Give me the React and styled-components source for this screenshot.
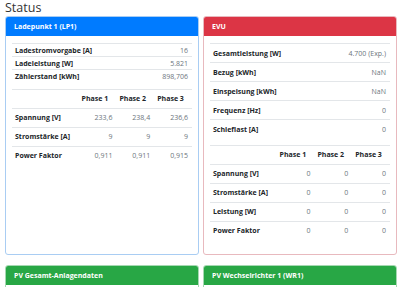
import styled, { createGlobalStyle } from 'styled-components';

const GlobalStyle = createGlobalStyle`
  html, body {
    margin: 0;
    padding: 0;
    background: #fff;
  }
  body {
    font-family: "Open Sans", "Noto Sans", sans-serif;
    color: #212529;
  }
`;

const Page = styled.div`
  padding: 0 3px 0 5px;
`;

const Title = styled.h1`
  margin: 0;
  font-size: 12.5px;
  font-weight: 400;
  line-height: 16px;
  color: #333;
`;

const Grid = styled.div`
  display: grid;
  grid-template-columns: 1fr 1fr;
  column-gap: 4px;
  row-gap: 10px;
`;

const Card = styled.div`
  display: flex;
  flex-direction: column;
  border: 1px solid ${(p) => p.$border};
  border-radius: 3px;
  overflow: hidden;
  background: #fff;
`;

const CardHeader = styled.div`
  display: flex;
  align-items: center;
  height: 19px;
  padding: 0 8px;
  background: ${(p) => p.$bg};
  color: #fff;
  font-size: 7px;
  font-weight: 700;
`;

const CardBody = styled.div`
  flex: 1;
  padding: 7px 6px 8px 6px;
`;

const Table = styled.table`
  width: 100%;
  border-collapse: collapse;
  margin-bottom: 6px;
  font-size: 7px;
  table-layout: fixed;
`;

const Row = styled.tr`
  height: ${(p) => p.$h || 19}px;
`;

const Label = styled.td`
  padding: 0 3px;
  border-top: 1px solid #e3e6e9;
  font-weight: 700;
  color: #212529;
  text-align: left;
  white-space: nowrap;
`;

const Value = styled.td`
  padding: 0 4px;
  border-top: 1px solid #e3e6e9;
  color: #6c757d;
  text-align: right;
  white-space: nowrap;
`;

const Head = styled.th`
  padding: 0 3px;
  border-top: 1px solid #e3e6e9;
  border-bottom: 1px solid #e3e6e9;
  font-weight: 700;
  text-align: left;
  white-space: nowrap;
`;

const KeyValueTable = ({ rows, h }) => (
  <Table>
    <tbody>
      {rows.map(([k, v]) => (
        <Row key={k} $h={h}>
          <Label>{k}</Label>
          <Value>{v}</Value>
        </Row>
      ))}
    </tbody>
  </Table>
);

const PhaseTable = ({ rows }) => (
  <Table>
    <colgroup>
      <col style={{ width: '37%' }} />
      <col style={{ width: '21%' }} />
      <col style={{ width: '21%' }} />
      <col style={{ width: '21%' }} />
    </colgroup>
    <thead>
      <Row>
        <Head />
        <Head>Phase 1</Head>
        <Head>Phase 2</Head>
        <Head>Phase 3</Head>
      </Row>
    </thead>
    <tbody>
      {rows.map(([k, ...vals]) => (
        <Row key={k}>
          <Label>{k}</Label>
          {vals.map((v, i) => (
            <Value key={i}>{v}</Value>
          ))}
        </Row>
      ))}
    </tbody>
  </Table>
);

const colors = {
  blue: { bg: '#007bff', border: '#a9cdf3' },
  red: { bg: '#dc3545', border: '#e8b9be' },
  green: { bg: '#28a745', border: '#a6d8b2' },
};

const StatusCard = ({ title, color, children }) => (
  <Card $border={colors[color].border}>
    <CardHeader $bg={colors[color].bg}>{title}</CardHeader>
    <CardBody>{children}</CardBody>
  </Card>
);

export default function App() {
  return (
    <Page>
      <GlobalStyle />
      <Title>Status</Title>
      <Grid>
        <StatusCard title="Ladepunkt 1 (LP1)" color="blue">
          <KeyValueTable
            h={13}
            rows={[
              ['Ladestromvorgabe [A]', '16'],
              ['Ladeleistung [W]', '5.821'],
              ['Zählerstand [kWh]', '898,706'],
            ]}
          />
          <PhaseTable
            rows={[
              ['Spannung [V]', '233,6', '238,4', '236,6'],
              ['Stromstärke [A]', '9', '9', '9'],
              ['Power Faktor', '0,911', '0,911', '0,915'],
            ]}
          />
        </StatusCard>
        <StatusCard title="EVU" color="red">
          <KeyValueTable
            rows={[
              ['Gesamtleistung [W]', '4.700 (Exp.)'],
              ['Bezug [kWh]', 'NaN'],
              ['Einspeisung [kWh]', 'NaN'],
              ['Frequenz [Hz]', '0'],
              ['Schieflast [A]', '0'],
            ]}
          />
          <PhaseTable
            rows={[
              ['Spannung [V]', '0', '0', '0'],
              ['Stromstärke [A]', '0', '0', '0'],
              ['Leistung [W]', '0', '0', '0'],
              ['Power Faktor', '0', '0', '0'],
            ]}
          />
        </StatusCard>
        <StatusCard title="PV Gesamt-Anlagendaten" color="green" />
        <StatusCard title="PV Wechselrichter 1 (WR1)" color="green" />
      </Grid>
    </Page>
  );
}
